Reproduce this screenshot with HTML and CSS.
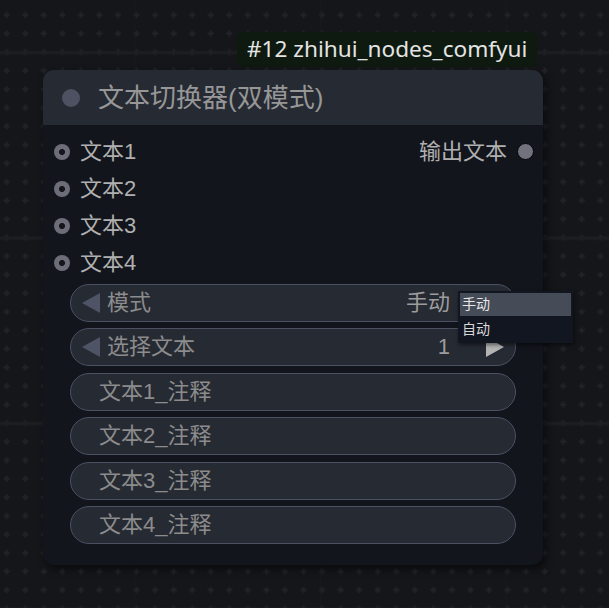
FILE: index.html
```html
<!DOCTYPE html>
<html lang="zh">
<head>
<meta charset="utf-8">
<title>文本切换器(双模式)</title>
<link rel="stylesheet" href="styles.css">
</head>
<body>
<div class="canvas">
  <svg class="grid" width="609" height="608" viewBox="0 0 609 608" aria-hidden="true">
    <defs>
      <pattern id="dots" patternUnits="userSpaceOnUse" width="18.55" height="18.55" x="-2.6" y="5.7">
        <rect x="6.3" y="8.3" width="6" height="2" fill="#222328"/>
        <rect x="8.3" y="6.3" width="2" height="6" fill="#222328"/>
      </pattern>
      <pattern id="major" patternUnits="userSpaceOnUse" width="185.5" height="185.5" x="-50" y="52.7">
        <rect x="185.2" y="0" width="3" height="185.5" fill="#1d1e22"/>
        <rect x="0" y="-1.5" width="185.5" height="3" fill="#1d1e22"/>
        <rect x="0" y="184" width="185.5" height="3" fill="#1d1e22"/>
      </pattern>
    </defs>
    <rect width="609" height="608" fill="#151619"/>
    <rect width="609" height="608" fill="url(#dots)"/>
    <rect width="609" height="608" fill="url(#major)"/>
  </svg>

  <div class="tooltip">#12 zhihui_nodes_comfyui</div>

  <div class="node">
    <div class="node-title">
      <span class="title-dot"></span>
      <span class="title-text">文本切换器(双模式)</span>
    </div>
    <div class="node-body">
      <div class="slots">
        <div class="slot-row">
          <div class="slot-in"><span class="slot-ring"></span><span class="slot-label">文本1</span></div>
          <div class="slot-out"><span class="slot-label">输出文本</span><span class="slot-fill"></span></div>
        </div>
        <div class="slot-row">
          <div class="slot-in"><span class="slot-ring"></span><span class="slot-label">文本2</span></div>
        </div>
        <div class="slot-row">
          <div class="slot-in"><span class="slot-ring"></span><span class="slot-label">文本3</span></div>
        </div>
        <div class="slot-row">
          <div class="slot-in"><span class="slot-ring"></span><span class="slot-label">文本4</span></div>
        </div>
      </div>
      <div class="widgets">
        <div class="widget combo">
          <svg class="arrow arrow-left" width="18" height="20" viewBox="0 0 18 20"><polygon points="18,0 18,20 0,10"/></svg>
          <span class="w-label">模式</span>
          <span class="w-value">手动</span>
          <svg class="arrow arrow-right" width="18" height="20" viewBox="0 0 18 20"><polygon points="0,0 0,20 18,10"/></svg>
        </div>
        <div class="widget combo">
          <svg class="arrow arrow-left" width="18" height="20" viewBox="0 0 18 20"><polygon points="18,0 18,20 0,10"/></svg>
          <span class="w-label">选择文本</span>
          <span class="w-value">1</span>
          <svg class="arrow arrow-right active" width="18" height="20" viewBox="0 0 18 20"><polygon points="0,0 0,20 18,10"/></svg>
        </div>
        <div class="widget text"><span class="w-label">文本1_注释</span></div>
        <div class="widget text"><span class="w-label">文本2_注释</span></div>
        <div class="widget text"><span class="w-label">文本3_注释</span></div>
        <div class="widget text"><span class="w-label">文本4_注释</span></div>
      </div>
    </div>
  </div>

  <div class="menu">
    <div class="menu-item selected">手动</div>
    <div class="menu-item">自动</div>
  </div>
</div>
</body>
</html>
```

FILE: styles.css
```css
* { box-sizing: border-box; }

html, body {
  margin: 0;
  padding: 0;
  background: #151619;
}

body {
  width: 609px;
  height: 608px;
  overflow: hidden;
  font-family: "Liberation Sans", "Noto Sans CJK SC", sans-serif;
}

.canvas {
  position: relative;
  width: 609px;
  height: 608px;
  overflow: hidden;
}

.grid {
  position: absolute;
  left: 0;
  top: 0;
  display: block;
}

.tooltip {
  position: absolute;
  left: 237px;
  top: 32px;
  height: 35px;
  padding: 0 10px;
  display: flex;
  align-items: center;
  background: #0e1a0f;
  border-radius: 6px;
  color: #e4e4e4;
  font-family: "Noto Sans", "Noto Sans CJK SC", sans-serif;
  font-size: 22.6px;
  line-height: 1;
  white-space: nowrap;
}

.node {
  position: absolute;
  left: 43px;
  top: 70px;
  width: 500px;
  height: 495px;
  background: #12151c;
  border-radius: 11px;
  box-shadow: 3px 4px 9px rgba(0, 0, 0, 0.55);
}

.node-title {
  height: 55px;
  display: flex;
  align-items: center;
  padding-left: 19px;
  gap: 18px;
  background: #262a33;
  border-radius: 11px 11px 0 0;
}

.title-dot {
  width: 18px;
  height: 18px;
  border-radius: 50%;
  background: #4d5162;
  flex: none;
}

.title-text {
  color: #979797;
  font-size: 26px;
  line-height: 1;
  margin-top: 1px;
}

.node-body {
  padding: 8px 0 21px;
}

.slots {
  display: flex;
  flex-direction: column;
}

.slot-row {
  height: 37px;
  display: flex;
  align-items: center;
  justify-content: space-between;
  padding: 0 9px 0 11px;
}

.slot-in, .slot-out {
  display: flex;
  align-items: center;
  gap: 10px;
}

.slot-ring {
  width: 16px;
  height: 16px;
  border-radius: 50%;
  background: radial-gradient(circle, #14161c 0 2.7px, #6d6d79 3.3px);
  flex: none;
}

.slot-fill {
  width: 17px;
  height: 17px;
  border-radius: 50%;
  background: #72717e;
  border: 1.5px solid #050507;
  flex: none;
}

.slot-label {
  color: #b0b0b0;
  font-size: 22px;
  line-height: 1;
}

.widgets {
  margin-top: 3px;
  padding: 0 27px;
  display: flex;
  flex-direction: column;
  gap: 6.4px;
}

.widget {
  height: 38px;
  border-radius: 19px;
  background: #262a33;
  border: 1.5px solid #4b5163;
  display: flex;
  align-items: center;
  font-size: 22px;
  line-height: 1;
}

.combo {
  padding: 0 11px 0 11px;
}

.text {
  padding-left: 28px;
}

.w-label {
  color: #8c8c8c;
}

.combo .w-label {
  margin-left: 7px;
}

.w-value {
  margin-left: auto;
  margin-right: 36px;
  color: #9c9c9c;
}

.arrow {
  display: block;
  flex: none;
}

.arrow polygon {
  fill: #4e5465;
}

.arrow.active polygon {
  fill: #b4b4b4;
}

.menu {
  position: absolute;
  left: 458px;
  top: 291px;
  width: 115px;
  padding: 2px;
  background: #121620;
  box-shadow: 1px 2px 4px rgba(0, 0, 0, 0.5);
  display: flex;
  flex-direction: column;
  gap: 2px;
}

.menu-item {
  height: 23px;
  display: flex;
  align-items: center;
  padding: 0 0 3px 2px;
  color: #d8d8d8;
  font-family: "Noto Sans CJK SC", sans-serif;
  font-size: 14px;
  line-height: 1;
}

.menu-item.selected {
  background: #464b58;
  color: #e6e6e6;
}
```
